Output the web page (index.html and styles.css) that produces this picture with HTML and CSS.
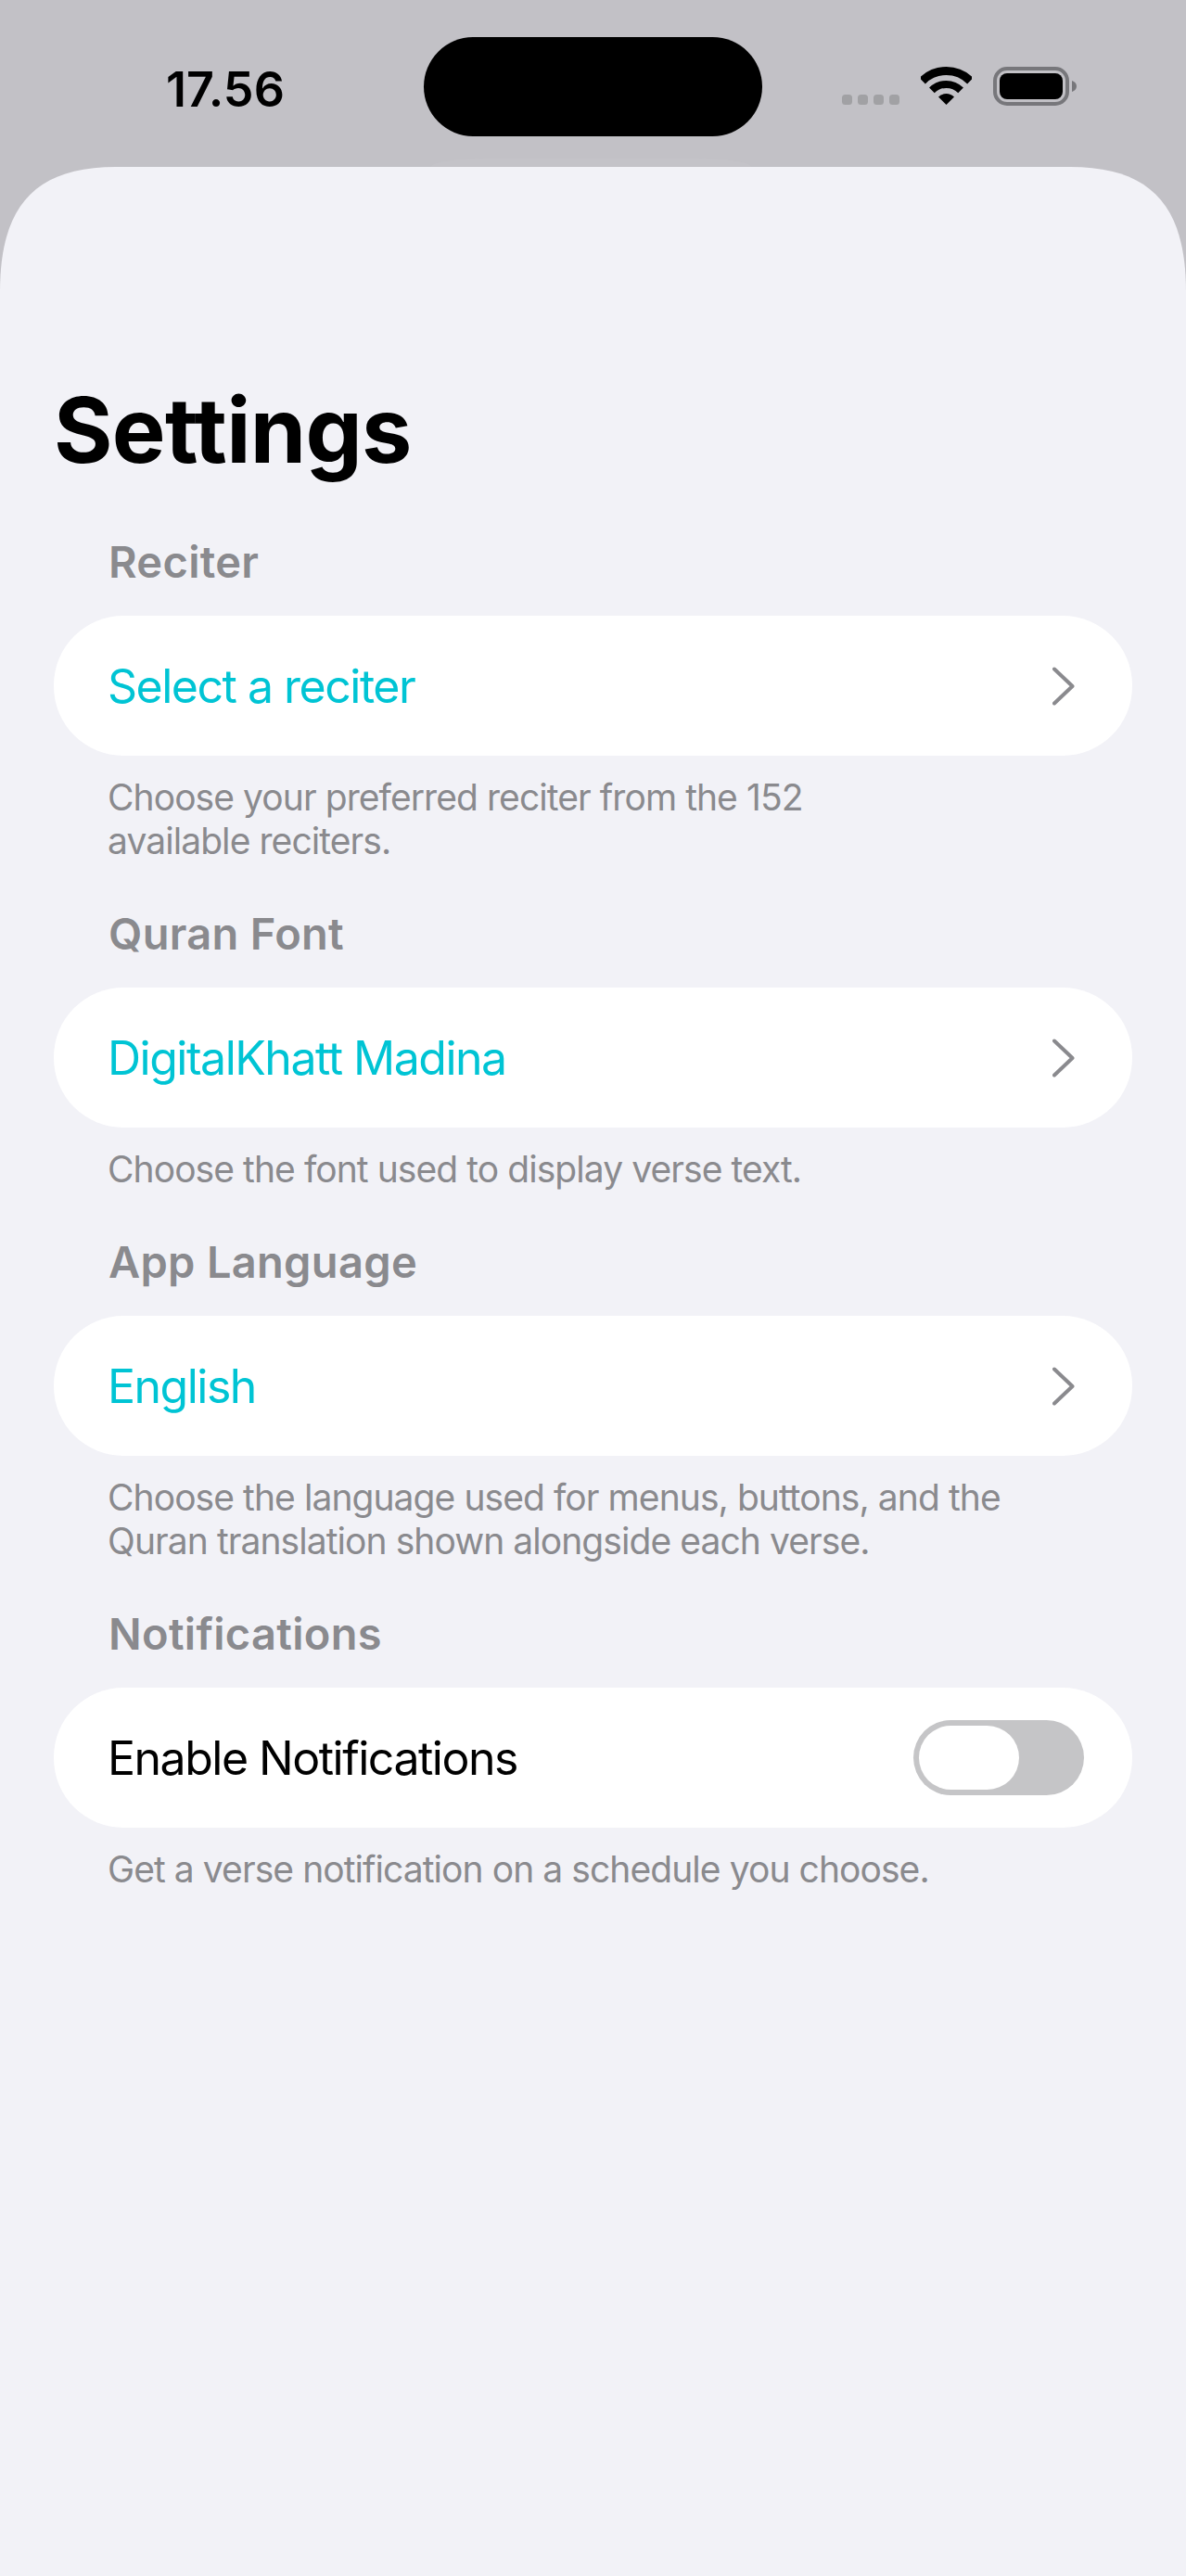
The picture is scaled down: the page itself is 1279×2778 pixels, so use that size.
FILE: index.html
```html
<!DOCTYPE html>
<html lang="en">
<head>
<meta charset="utf-8">
<title>Settings</title>
<link rel="stylesheet" href="styles.css">
</head>
<body>
<div class="status">
  <div class="time">17.56</div>
  <div class="island"></div>
  <div class="indicators">
    <div class="dots"><i></i><i></i><i></i><i></i></div>
    <svg class="wifi" width="55" height="41" viewBox="0 0 55 41">
      <path d="M1.7 15.2A36.5 36.5 0 0 1 53.3 15.2" fill="none" stroke="#000" stroke-width="9"/>
      <path d="M11.9 25.4A22 22 0 0 1 43.1 25.4" fill="none" stroke="#000" stroke-width="8"/>
      <path d="M27.5 41L19 32.5A12 12 0 0 1 36 32.5Z" fill="#000"/>
    </svg>
    <svg class="battery" width="90" height="42" viewBox="0 0 90 42">
      <rect x="2" y="2" width="78" height="38" rx="13" fill="none" stroke="#77777b" stroke-width="4"/>
      <rect x="7" y="7" width="68" height="28" rx="8" fill="#000"/>
      <path d="M85 15C88 16 90 18 90 21S88 26 85 27Z" fill="#77777b"/>
    </svg>
  </div>
</div>
<main class="sheet">
  <h1 class="title">Settings</h1>
  <section class="group">
    <h2 class="label">Reciter</h2>
    <div class="row">
      <span class="value">Select a reciter</span>
      <svg class="chev" width="24" height="42" viewBox="0 0 24 42"><path d="M2 2.5L21.5 21L2 39.5" fill="none" stroke="#8a8a8e" stroke-width="4" stroke-linecap="round" stroke-linejoin="round"/></svg>
    </div>
    <p class="note">Choose your preferred reciter from the 152<br>available reciters.</p>
  </section>
  <section class="group">
    <h2 class="label">Quran Font</h2>
    <div class="row">
      <span class="value">DigitalKhatt Madina</span>
      <svg class="chev" width="24" height="42" viewBox="0 0 24 42"><path d="M2 2.5L21.5 21L2 39.5" fill="none" stroke="#8a8a8e" stroke-width="4" stroke-linecap="round" stroke-linejoin="round"/></svg>
    </div>
    <p class="note">Choose the font used to display verse text.</p>
  </section>
  <section class="group">
    <h2 class="label">App Language</h2>
    <div class="row">
      <span class="value">English</span>
      <svg class="chev" width="24" height="42" viewBox="0 0 24 42"><path d="M2 2.5L21.5 21L2 39.5" fill="none" stroke="#8a8a8e" stroke-width="4" stroke-linecap="round" stroke-linejoin="round"/></svg>
    </div>
    <p class="note">Choose the language used for menus, buttons, and the<br>Quran translation shown alongside each verse.</p>
  </section>
  <section class="group">
    <h2 class="label">Notifications</h2>
    <div class="row">
      <span class="plain">Enable Notifications</span>
      <div class="toggle"><div class="thumb"></div></div>
    </div>
    <p class="note">Get a verse notification on a schedule you choose.</p>
  </section>
</main>
</body>
</html>
```
FILE: styles.css
```css
* { box-sizing: border-box; }
html, body { margin: 0; padding: 0; }
body {
  width: 1279px;
  height: 2778px;
  overflow: hidden;
  background: #c2c1c6;
  font-family: Inter, "Liberation Sans", sans-serif;
  color: #000;
}
.status {
  position: relative;
  height: 180px;
  display: flex;
  align-items: flex-start;
  padding: 40px 118px 0 179px;
}
.status::after {
  content: "";
  position: absolute;
  left: 465px;
  bottom: 0;
  width: 345px;
  height: 9px;
  border-radius: 60px 60px 0 0 / 9px 9px 0 0;
  background: #c4c3c8;
}
.time {
  width: 278px;
  margin-top: 32px;
  font-size: 52px;
  line-height: 50px;
  font-weight: 600;
  letter-spacing: 0.1px;
}
.island {
  width: 365px;
  height: 107px;
  border-radius: 54px;
  background: #000;
}
.indicators {
  margin-left: 86px;
  margin-top: 32px;
  display: flex;
  align-items: flex-end;
  height: 42px;
}
.dots {
  display: flex;
  gap: 6px;
  margin-bottom: 1px;
  margin-right: 23px;
}
.dots i {
  display: block;
  width: 11px;
  height: 11px;
  border-radius: 3.5px;
  background: #a1a1a4;
}
.wifi { margin-right: 23px; margin-bottom: 1px; }
.sheet {
  height: 2598px;
  background: #f2f2f7;
  clip-path: path("M0 135C0 45 35 0 125 0H1154C1244 0 1279 45 1279 135V2598H0Z");
  padding: 224px 58px 0;
}
.title {
  margin: 0 0 5px;
  font-size: 97px;
  line-height: 120px;
  font-weight: 700;
  letter-spacing: -0.7px;
}
.group { padding-top: 49px; }
.label {
  margin: 0 0 30px;
  padding-left: 59px;
  font-size: 47px;
  line-height: 56px;
  font-weight: 600;
  letter-spacing: 0.3px;
  color: #8a8a8e;
}
.row {
  height: 151px;
  border-radius: 75px;
  background: #fff;
  display: flex;
  align-items: center;
  justify-content: space-between;
  padding: 0 62px 0 58px;
  font-size: 50px;
  letter-spacing: -1.5px;
}
.value { color: #00c4d4; }
.plain { color: #000; }
.chev { flex: none; }
.toggle {
  width: 184px;
  height: 81px;
  margin-right: -10px;
  border-radius: 41px;
  background: #c5c5c7;
  padding: 6px;
}
.thumb {
  width: 108px;
  height: 69px;
  border-radius: 35px;
  background: #fff;
}
.note {
  margin: 21px 0 0;
  padding-left: 58px;
  font-size: 39px;
  line-height: 47px;
  letter-spacing: -0.93px;
  color: #8a8a8e;
}
```
